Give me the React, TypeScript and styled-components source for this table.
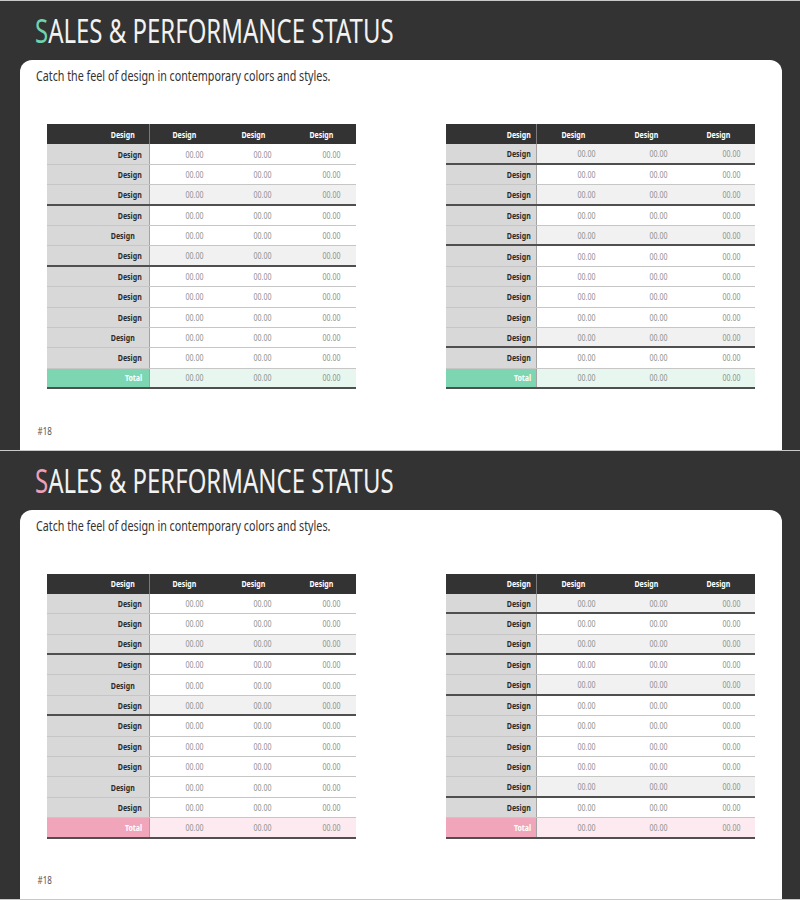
import React from "react"
import styled, { createGlobalStyle } from "styled-components"

const GlobalStyle = createGlobalStyle`
  html, body {
    margin: 0;
    padding: 0;
    background: #333333;
  }
  body {
    font-family: "Noto Sans", "Liberation Sans", sans-serif;
  }
`

type Tone = "white" | "gray"
type Divider = "thin" | "thick"

interface IRowSpec {
  tone: Tone
  divider: Divider
  shifted?: boolean
}

interface ITableSpec {
  labelWidth: number
  labelPad: number
  headerPad: number
  valuePad: number
  rows: IRowSpec[]
}

interface IAccent {
  main: string
  strong: string
  soft: string
}

const GREEN: IAccent = { main: "#6fd3ae", strong: "#7dd6b2", soft: "#e7f7f0" }
const PINK: IAccent = { main: "#ef9fb7", strong: "#f1a5ba", soft: "#fdeaf0" }

const LEFT_TABLE: ITableSpec = {
  labelWidth: 103,
  labelPad: 7,
  headerPad: 14,
  valuePad: 20,
  rows: [
    { tone: "white", divider: "thin" },
    { tone: "white", divider: "thin" },
    { tone: "gray", divider: "thick" },
    { tone: "white", divider: "thin" },
    { tone: "white", divider: "thin", shifted: true },
    { tone: "gray", divider: "thick" },
    { tone: "white", divider: "thin" },
    { tone: "white", divider: "thin" },
    { tone: "white", divider: "thin" },
    { tone: "white", divider: "thin", shifted: true },
    { tone: "white", divider: "thin" },
  ],
}

const RIGHT_TABLE: ITableSpec = {
  labelWidth: 91,
  labelPad: 5,
  headerPad: 5,
  valuePad: 26,
  rows: [
    { tone: "gray", divider: "thick" },
    { tone: "white", divider: "thin" },
    { tone: "gray", divider: "thick" },
    { tone: "white", divider: "thin" },
    { tone: "gray", divider: "thick" },
    { tone: "white", divider: "thin" },
    { tone: "white", divider: "thin" },
    { tone: "white", divider: "thin" },
    { tone: "white", divider: "thin" },
    { tone: "gray", divider: "thick" },
    { tone: "white", divider: "thin" },
  ],
}

const Page = styled.div`
  display: flex;
  flex-direction: column;
  width: 800px;
  height: 900px;
  box-sizing: border-box;
  border-bottom: 1px solid #c9c9c9;
`

const Slide = styled.section`
  flex: 1;
  display: flex;
  flex-direction: column;
  box-sizing: border-box;
  border-top: 1px solid #c9c9c9;
  background: #333333;
`

const TitleBar = styled.header`
  height: 59px;
  display: flex;
  align-items: center;
  padding-left: 35px;
`

/* no condensed face is installed, so the narrow display type is squeezed */
const Title = styled.h1`
  margin: 0;
  font-weight: 400;
  font-size: 33px;
  line-height: 1;
  color: #f2f2f2;
  white-space: nowrap;
  transform: scaleX(0.726);
  transform-origin: left center;
`

const Initial = styled.span<{ $color: string }>`
  color: ${(p) => p.$color};
`

const Card = styled.div`
  flex: 1;
  display: flex;
  flex-direction: column;
  margin: 0 18px 0 20px;
  padding: 8px 27px 12px 16px;
  background: #ffffff;
  border-radius: 12px 12px 0 0;
`

const Subtitle = styled.p`
  margin: 0;
  font-size: 14px;
  line-height: 16px;
  color: #333333;
  white-space: nowrap;
  transform: scaleX(0.766);
  transform-origin: left center;
`

const Tables = styled.div`
  display: flex;
  justify-content: space-between;
  margin: 40px 0 0 11px;
`

const Table = styled.div`
  width: 309px;
  display: flex;
  flex-direction: column;
`

const Row = styled.div<{ $labelWidth: number; $divider?: Divider }>`
  display: grid;
  grid-template-columns: ${(p) => p.$labelWidth}px repeat(3, 1fr);
  height: 20.4px;
  box-sizing: border-box;
  border-bottom: ${(p) =>
    p.$divider === "thick"
      ? "2px solid #4f4f4f"
      : p.$divider === "thin"
      ? "1px solid #c6c6c6"
      : "none"};
`

const Squeeze = styled.span<{ $origin: "right" | "center" }>`
  display: inline-block;
  white-space: nowrap;
  transform: scaleX(0.78);
  transform-origin: ${(p) => p.$origin} center;
`

const HeadCell = styled.div<{ $label?: boolean; $pad?: number }>`
  display: flex;
  align-items: center;
  justify-content: ${(p) => (p.$label ? "flex-end" : "center")};
  padding-right: ${(p) => (p.$label ? p.$pad : 0)}px;
  background: #333333;
  border-right: ${(p) => (p.$label ? "1px solid #7a7a7a" : "none")};
  color: #ffffff;
  font-weight: 700;
  font-size: 9px;
`

const LabelCell = styled.div<{ $pad: number; $bg: string; $color: string }>`
  display: flex;
  align-items: center;
  justify-content: flex-end;
  padding-right: ${(p) => p.$pad}px;
  background: ${(p) => p.$bg};
  border-right: 1px solid #a3a3a3;
  color: ${(p) => p.$color};
  font-weight: 700;
  font-size: 9px;
`

const ValueCell = styled.div<{ $pad: number; $bg: string }>`
  display: flex;
  align-items: center;
  justify-content: center;
  padding-left: ${(p) => p.$pad}px;
  background: ${(p) => p.$bg};
  color: #8e8e8e;
  font-size: 9px;
`

const PageNumber = styled.div`
  margin-top: auto;
  padding-left: 2px;
  font-size: 10px;
  color: #555555;
  transform: scaleX(0.8);
  transform-origin: left center;
`

const DataTable = ({ spec, accent }: { spec: ITableSpec; accent: IAccent }) => (
  <Table>
    <Row $labelWidth={spec.labelWidth}>
      <HeadCell $label $pad={spec.headerPad}>
        <Squeeze $origin="right">Design</Squeeze>
      </HeadCell>
      {[0, 1, 2].map((c) => (
        <HeadCell key={c}>
          <Squeeze $origin="center">Design</Squeeze>
        </HeadCell>
      ))}
    </Row>
    {spec.rows.map((row, i) => {
      const bg = row.tone === "gray" ? "#f1f1f1" : "#ffffff"
      return (
        <Row key={i} $labelWidth={spec.labelWidth} $divider={row.divider}>
          <LabelCell
            $pad={row.shifted ? 14 : spec.labelPad}
            $bg="#d8d8d8"
            $color="#2b2b2b"
          >
            <Squeeze $origin="right">Design</Squeeze>
          </LabelCell>
          {[0, 1, 2].map((c) => (
            <ValueCell key={c} $pad={spec.valuePad} $bg={bg}>
              <Squeeze $origin="center">00.00</Squeeze>
            </ValueCell>
          ))}
        </Row>
      )
    })}
    <Row $labelWidth={spec.labelWidth} $divider="thick">
      <LabelCell $pad={spec.labelPad} $bg={accent.strong} $color="#ffffff">
        <Squeeze $origin="right">Total</Squeeze>
      </LabelCell>
      {[0, 1, 2].map((c) => (
        <ValueCell key={c} $pad={spec.valuePad} $bg={accent.soft}>
          <Squeeze $origin="center">00.00</Squeeze>
        </ValueCell>
      ))}
    </Row>
  </Table>
)

const StatusSlide = ({ accent }: { accent: IAccent }) => (
  <Slide>
    <TitleBar>
      <Title>
        <Initial $color={accent.main}>S</Initial>ALES &amp; PERFORMANCE STATUS
      </Title>
    </TitleBar>
    <Card>
      <Subtitle>Catch the feel of design in contemporary colors and styles.</Subtitle>
      <Tables>
        <DataTable spec={LEFT_TABLE} accent={accent} />
        <DataTable spec={RIGHT_TABLE} accent={accent} />
      </Tables>
      <PageNumber>#18</PageNumber>
    </Card>
  </Slide>
)

export default function App() {
  return (
    <>
      <GlobalStyle />
      <Page>
        <StatusSlide accent={GREEN} />
        <StatusSlide accent={PINK} />
      </Page>
    </>
  )
}
